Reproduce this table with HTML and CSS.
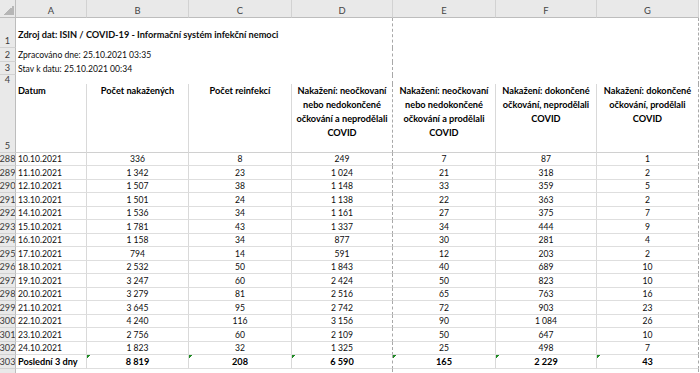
FILE: index.html
```html
<!DOCTYPE html>
<html>
<head>
    <title>ISIN - COVID-19</title>
    <link rel="stylesheet" href="styles.css">
</head>
<body>
    <div class="sheet">
        <!-- column letters -->
        <div class="corner"><span class="corner-tri"></span></div>
        <div class="col-head">A</div>
        <div class="col-head">B</div>
        <div class="col-head">C</div>
        <div class="col-head">D</div>
        <div class="col-head">E</div>
        <div class="col-head">F</div>
        <div class="col-head">G</div>

        <!-- info rows -->
        <div class="rh">1</div>
        <div class="info info-title">Zdroj dat: ISIN / COVID-19 - Informační systém infekční nemoci</div>
        <div class="info-rest"></div>
        <div class="rh">2</div>
        <div class="info">Zpracováno dne: 25.10.2021 03:35</div>
        <div class="rh">3</div>
        <div class="info">Stav k datu: 25.10.2021 00:34</div>
        <div class="rh rh-short">4</div>
        <div class="info"></div>

        <!-- table header -->
        <div class="rh">5</div>
        <div class="c h date">Datum</div>
        <div class="c h">Počet nakažených</div>
        <div class="c h">Počet reinfekcí</div>
        <div class="c h brk">Nakažení: neočkovaní<br>nebo nedokončené<br>očkování a neprodělali<br>COVID</div>
        <div class="c h">Nakažení: neočkovaní<br>nebo nedokončené<br>očkování a prodělali<br>COVID</div>
        <div class="c h">Nakažení: dokončené<br>očkování, neprodělali<br>COVID</div>
        <div class="c h brk">Nakažení: dokončené<br>očkování, prodělali<br>COVID</div>

        <!-- data -->
        <div class="rh">288</div><div class="c date">10.10.2021</div><div class="c">336</div><div class="c">8</div><div class="c brk">249</div><div class="c">7</div><div class="c">87</div><div class="c brk">1</div>
        <div class="rh">289</div><div class="c date">11.10.2021</div><div class="c">1&nbsp;342</div><div class="c">23</div><div class="c brk">1&nbsp;024</div><div class="c">21</div><div class="c">318</div><div class="c brk">2</div>
        <div class="rh">290</div><div class="c date">12.10.2021</div><div class="c">1&nbsp;507</div><div class="c">38</div><div class="c brk">1&nbsp;148</div><div class="c">33</div><div class="c">359</div><div class="c brk">5</div>
        <div class="rh">291</div><div class="c date">13.10.2021</div><div class="c">1&nbsp;501</div><div class="c">24</div><div class="c brk">1&nbsp;138</div><div class="c">22</div><div class="c">363</div><div class="c brk">2</div>
        <div class="rh">292</div><div class="c date">14.10.2021</div><div class="c">1&nbsp;536</div><div class="c">34</div><div class="c brk">1&nbsp;161</div><div class="c">27</div><div class="c">375</div><div class="c brk">7</div>
        <div class="rh">293</div><div class="c date">15.10.2021</div><div class="c">1&nbsp;781</div><div class="c">43</div><div class="c brk">1&nbsp;337</div><div class="c">34</div><div class="c">444</div><div class="c brk">9</div>
        <div class="rh">294</div><div class="c date">16.10.2021</div><div class="c">1&nbsp;158</div><div class="c">34</div><div class="c brk">877</div><div class="c">30</div><div class="c">281</div><div class="c brk">4</div>
        <div class="rh">295</div><div class="c date">17.10.2021</div><div class="c">794</div><div class="c">14</div><div class="c brk">591</div><div class="c">12</div><div class="c">203</div><div class="c brk">2</div>
        <div class="rh">296</div><div class="c date">18.10.2021</div><div class="c">2&nbsp;532</div><div class="c">50</div><div class="c brk">1&nbsp;843</div><div class="c">40</div><div class="c">689</div><div class="c brk">10</div>
        <div class="rh">297</div><div class="c date">19.10.2021</div><div class="c">3&nbsp;247</div><div class="c">60</div><div class="c brk">2&nbsp;424</div><div class="c">50</div><div class="c">823</div><div class="c brk">10</div>
        <div class="rh">298</div><div class="c date">20.10.2021</div><div class="c">3&nbsp;279</div><div class="c">81</div><div class="c brk">2&nbsp;516</div><div class="c">65</div><div class="c">763</div><div class="c brk">16</div>
        <div class="rh">299</div><div class="c date">21.10.2021</div><div class="c">3&nbsp;645</div><div class="c">95</div><div class="c brk">2&nbsp;742</div><div class="c">72</div><div class="c">903</div><div class="c brk">23</div>
        <div class="rh">300</div><div class="c date">22.10.2021</div><div class="c">4&nbsp;240</div><div class="c">116</div><div class="c brk">3&nbsp;156</div><div class="c">90</div><div class="c">1&nbsp;084</div><div class="c brk">26</div>
        <div class="rh">301</div><div class="c date">23.10.2021</div><div class="c">2&nbsp;756</div><div class="c">60</div><div class="c brk">2&nbsp;109</div><div class="c">50</div><div class="c">647</div><div class="c brk">10</div>
        <div class="rh">302</div><div class="c date">24.10.2021</div><div class="c">1&nbsp;823</div><div class="c">32</div><div class="c brk">1&nbsp;325</div><div class="c">25</div><div class="c">498</div><div class="c brk">7</div>
        <div class="rh">303</div><div class="c date total">Poslední 3 dny</div><div class="c total flag">8&nbsp;819</div><div class="c total flag">208</div><div class="c total flag brk">6&nbsp;590</div><div class="c total flag">165</div><div class="c total flag">2&nbsp;229</div><div class="c total flag brk">43</div>

        <div class="rh"></div>
        <div class="info"></div>
        <div class="info-tail"></div>
    </div>
</body>
</html>
```

FILE: styles.css
```css
html, body {
    margin: 0;
    padding: 0;
    background-color: #fff;
    font-family: Lato, 'Liberation Sans', sans-serif;
    font-size: 8.6px;
    color: #0d0d0d;
}

.sheet {
    display: grid;
    grid-template-columns: 16px 71px 102px 103px 101px 103px 101px 102px;
    grid-template-rows: 18px 30px 14px 13px 9px 69px repeat(16, 13.47px) 20px;
    width: 700px;
    height: 373px;
    overflow: hidden;
}

.sheet > div {
    box-sizing: border-box;
    min-width: 0;
}

/* headers */
.corner {
    background-color: #e9e9e9;
    border-right: 1px solid #bdbdbd;
    border-bottom: 1px solid #bdbdbd;
    display: flex;
    align-items: flex-end;
    justify-content: flex-end;
    padding: 0 1px 2px 0;
}

.corner-tri {
    width: 10px;
    height: 10px;
    background: linear-gradient(to top left, #b6b6b6 50%, transparent 50%);
}

.col-head {
    background-color: #e9e9e9;
    border-right: 1px solid #d2d2d2;
    border-bottom: 1px solid #bdbdbd;
    color: #444;
    font-size: 9.4px;
    display: flex;
    align-items: center;
    justify-content: center;
    padding-top: 3px;
}

.rh {
    background-color: #e9e9e9;
    border-right: 1px solid #bdbdbd;
    border-bottom: 1px solid #d2d2d2;
    color: #3a3a3a;
    font-size: 9.2px;
    display: flex;
    align-items: flex-end;
    justify-content: center;
    line-height: 12px;
    white-space: nowrap;
    overflow: hidden;
}

.rh-short {
    align-items: center;
    line-height: 9px;
    border-bottom: none;
}

/* info block at the top */
.info {
    grid-column: span 4;
    border-right: 1px dashed #a8a8a8;
    display: flex;
    align-items: center;
    padding-left: 2px;
    white-space: nowrap;
}

.info-title {
    font-weight: bold;
    font-size: 9.2px;
    padding-top: 2px;
}

.info-rest {
    grid-column: span 3;
    grid-row: span 4;
    border-right: 1px dashed #a8a8a8;
}

.info-tail {
    grid-column: span 3;
    border-right: 1px dashed #a8a8a8;
}

/* cells */
.c {
    border-right: 1px solid #d9d9d9;
    border-bottom: 1px solid #dedede;
    display: flex;
    align-items: flex-end;
    justify-content: center;
    line-height: 12px;
    white-space: nowrap;
}

.c.date {
    justify-content: flex-start;
    padding-left: 2px;
}

.c.brk {
    border-right: 1px dashed #a8a8a8;
}

.c.h {
    align-items: flex-start;
    text-align: center;
    font-weight: bold;
    font-size: 9.2px;
    line-height: 14px;
    color: #000;
    border-bottom-color: #d0d0d0;
}

.c.total {
    font-weight: bold;
    font-size: 9.2px;
    color: #000;
}

.c.flag {
    background: linear-gradient(135deg, #1f8b24 2.8px, transparent 2.8px);
}
```
